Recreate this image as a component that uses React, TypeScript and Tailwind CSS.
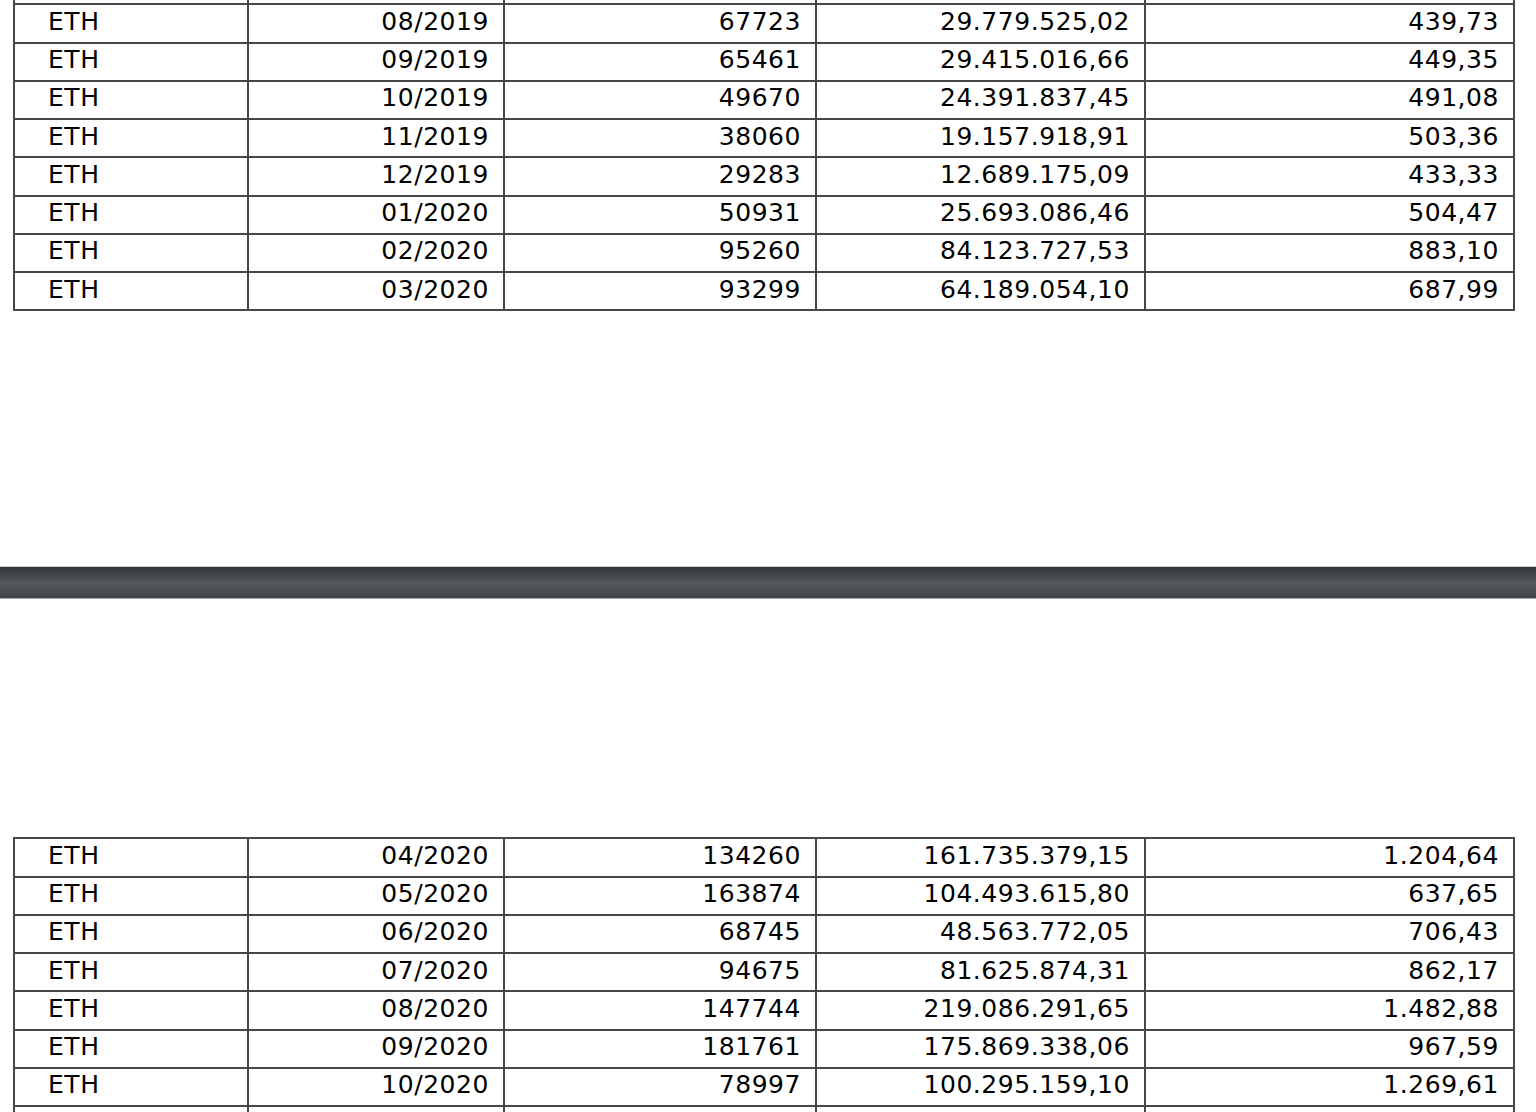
const top = [
  ["", "", "", "", ""],
  ["ETH", "08/2019", "67723", "29.779.525,02", "439,73"],
  ["ETH", "09/2019", "65461", "29.415.016,66", "449,35"],
  ["ETH", "10/2019", "49670", "24.391.837,45", "491,08"],
  ["ETH", "11/2019", "38060", "19.157.918,91", "503,36"],
  ["ETH", "12/2019", "29283", "12.689.175,09", "433,33"],
  ["ETH", "01/2020", "50931", "25.693.086,46", "504,47"],
  ["ETH", "02/2020", "95260", "84.123.727,53", "883,10"],
  ["ETH", "03/2020", "93299", "64.189.054,10", "687,99"],
];

const bottom = [
  ["ETH", "04/2020", "134260", "161.735.379,15", "1.204,64"],
  ["ETH", "05/2020", "163874", "104.493.615,80", "637,65"],
  ["ETH", "06/2020", "68745", "48.563.772,05", "706,43"],
  ["ETH", "07/2020", "94675", "81.625.874,31", "862,17"],
  ["ETH", "08/2020", "147744", "219.086.291,65", "1.482,88"],
  ["ETH", "09/2020", "181761", "175.869.338,06", "967,59"],
  ["ETH", "10/2020", "78997", "100.295.159,10", "1.269,61"],
  ["", "", "", "", ""],
];

function Table({ rows }: { rows: string[][] }) {
  return (
    <table className="ml-[13px] w-[1500px] border-collapse table-fixed text-[25px] leading-none tracking-[0.55px] text-black">
      <colgroup>
        <col className="w-[234px]" />
        <col className="w-[256px]" />
        <col className="w-[312px]" />
        <col className="w-[329px]" />
        <col className="w-[369px]" />
      </colgroup>
      <tbody>
        {rows.map((r, i) => (
          <tr key={i} className="h-[38.25px]">
            {r.map((c, j) => (
              <td
                key={j}
                className={
                  "border-2 border-[#474747] pb-[4px] pt-0 align-middle " +
                  (j === 0 ? "pl-[33px] text-left" : "pr-[14px] text-right")
                }
              >
                {c}
              </td>
            ))}
          </tr>
        ))}
      </tbody>
    </table>
  );
}

export default function App() {
  return (
    <div
      className="h-[1112px] w-[1536px] overflow-hidden bg-white"
      style={{ fontFamily: '"DejaVu Sans", Verdana, sans-serif' }}
    >
      <div className="mt-[-35px]">
        <Table rows={top} />
      </div>
      <div className="mt-[255px] h-[33px] border-y border-t-[#c9c9c9] border-b-[#a3a6a9] bg-gradient-to-b from-[#333537] via-[#53575a] to-[#424548]" />
      <div className="mt-[238px]">
        <Table rows={bottom} />
      </div>
    </div>
  );
}
